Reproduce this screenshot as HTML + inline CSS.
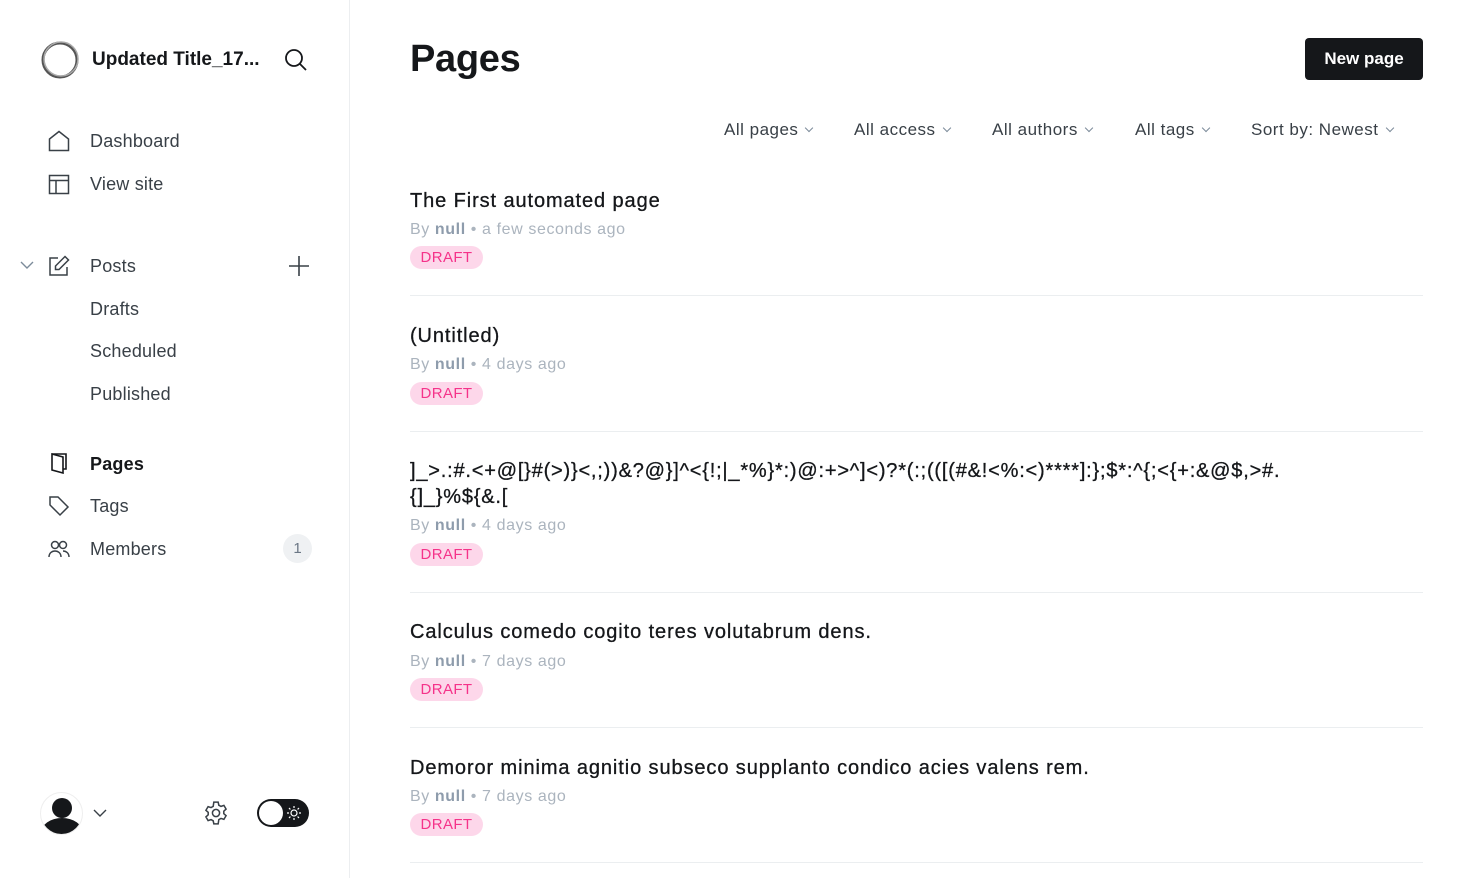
<!DOCTYPE html>
<html><head><meta charset="utf-8"><style>
*{margin:0;padding:0;box-sizing:border-box}
body{width:1483px;height:878px;overflow:hidden;background:#fff;font-family:"Liberation Sans",sans-serif;color:#15171a;position:relative}
.side{position:absolute;left:0;top:0;width:350px;height:878px;border-right:1px solid #eceef0}
.a{position:absolute}
.nav{position:absolute;left:90px;font-size:18px;color:#394047;letter-spacing:0.2px}
.ic{position:absolute;left:48px}
.main .t{position:absolute;left:410px;font-size:20px;color:#15171a;line-height:26px;letter-spacing:0.9px;-webkit-text-stroke:0.3px #15171a}
.m{position:absolute;left:410px;font-size:16px;color:#abb4be;letter-spacing:0.6px}
.m b{font-weight:bold;color:#8e9cac}
.bd{position:absolute;left:410px;height:23px;width:73px;border-radius:12px;background:#fdd7ea;color:#f5338a;font-size:15px;text-align:center;line-height:23px;letter-spacing:0.4px}
.hr{position:absolute;left:410px;width:1013px;height:1px;background:#ebeef0}
.f{position:absolute;top:120px;font-size:17px;color:#394047;letter-spacing:0.5px}
.f:after{content:"";display:inline-block;width:5px;height:5px;border-right:1px solid #7c8b9a;border-bottom:1px solid #7c8b9a;transform:rotate(45deg);margin-left:8px;vertical-align:4px}
</style></head><body>
<div class="side">
<svg class="a" style="left:40px;top:40px" width="40" height="40" viewBox="0 0 40 40"><circle cx="20" cy="20" r="17" fill="none" stroke="#555" stroke-width="3"/><circle cx="21" cy="19" r="17" fill="none" stroke="#aaa" stroke-width="1.5"/></svg>
<div class="a" style="left:92px;top:49px;font-size:19px;font-weight:bold">Updated Title_17...</div>
<svg class="a" style="left:284px;top:48px" width="24" height="24" viewBox="0 0 24 24" fill="none" stroke="#15171a" stroke-width="1.8"><circle cx="10" cy="10" r="8"/><path d="M16 16l6 6"/></svg>
<svg class="ic" style="top:130px" width="22" height="22" viewBox="0 0 22 22" fill="none" stroke="#394047" stroke-width="1.5"><path d="M1.5 20.5V9L11 1.5 20.5 9v11.5z"/></svg>
<div class="nav" style="top:131px">Dashboard</div>
<svg class="ic" style="top:173px" width="22" height="22" viewBox="0 0 22 22" fill="none" stroke="#394047" stroke-width="1.5"><rect x="1.5" y="2.5" width="19" height="18"/><path d="M1.5 7.5h19M8 7.5v13"/></svg>
<div class="nav" style="top:174px">View site</div>
<svg class="a" style="left:20px;top:260px" width="14" height="10" viewBox="0 0 14 10" fill="none" stroke="#7c8b9a" stroke-width="1.4"><path d="M1 2l6 6 6-6"/></svg>
<svg class="ic" style="top:255px" width="22" height="22" viewBox="0 0 22 22" fill="none" stroke="#394047" stroke-width="1.5"><path d="M10 3H2v17h17v-8"/><path d="M17 1.5l3.5 3.5L11 14.5H7.5V11z"/></svg>
<div class="nav" style="top:256px">Posts</div>
<svg class="a" style="left:288px;top:255px" width="22" height="22" viewBox="0 0 22 22" stroke="#394047" stroke-width="1.6"><path d="M11 1v20M1 11h20"/></svg>
<div class="nav" style="top:299px">Drafts</div>
<div class="nav" style="top:341px">Scheduled</div>
<div class="nav" style="top:384px">Published</div>
<svg class="ic" style="top:452px" width="22" height="22" viewBox="0 0 22 22" fill="none" stroke="#15171a" stroke-width="1.6"><path d="M4 2h14v15h-3"/><path d="M4 2l11 3v16L4 18z"/></svg>
<div class="nav" style="top:454px;font-weight:bold;color:#15171a">Pages</div>
<svg class="ic" style="top:495px" width="22" height="22" viewBox="0 0 22 22" fill="none" stroke="#394047" stroke-width="1.5"><path d="M2 2h8l10 10-8 8L2 10z"/></svg>
<div class="nav" style="top:496px">Tags</div>
<svg class="ic" style="top:538px" width="22" height="22" viewBox="0 0 22 22" fill="none" stroke="#394047" stroke-width="1.5"><circle cx="7" cy="7" r="3.5"/><path d="M1 19c0-4 3-6 6-6s6 2 6 6"/><circle cx="15" cy="7" r="3.5"/><path d="M15 13c3 0 6 2 6 6"/></svg>
<div class="nav" style="top:539px">Members</div>
<div class="a" style="left:283px;top:534px;width:29px;height:29px;border-radius:50%;background:#eff1f3;color:#6b7785;font-size:15px;text-align:center;line-height:29px">1</div>
<div class="a" style="left:40px;top:792px;width:43px;height:43px;border-radius:50%;border:1px solid #eee;overflow:hidden">
<div class="a" style="left:11px;top:5px;width:20px;height:20px;border-radius:50%;background:#15171a"></div>
<div class="a" style="left:0px;top:25px;width:42px;height:30px;border-radius:50% 50% 0 0;background:#15171a"></div></div>
<svg class="a" style="left:93px;top:808px" width="14" height="10" viewBox="0 0 14 10" fill="none" stroke="#394047" stroke-width="1.4"><path d="M1 2l6 6 6-6"/></svg>
<svg class="a" style="left:203px;top:800px" width="26" height="26" viewBox="0 0 24 24" fill="none" stroke="#394047" stroke-width="1.4"><path d="M10 2h4l.6 2.8 2 1.1 2.7-.9 2 3.4-2.1 1.9v2.3l2.1 1.9-2 3.4-2.7-.9-2 1.1L14 22h-4l-.6-2.8-2-1.1-2.7.9-2-3.4 2.1-1.9v-2.3L2.7 9.5l2-3.4 2.7.9 2-1.1z"/><circle cx="12" cy="12" r="3.3"/></svg>
<div class="a" style="left:257px;top:799px;width:52px;height:28px;border-radius:14px;background:#15171a">
<div class="a" style="left:2px;top:2px;width:24px;height:24px;border-radius:50%;background:#fff"></div>
<svg class="a" style="left:29px;top:6px" width="16" height="16" viewBox="0 0 16 16" fill="none" stroke="#fff" stroke-width="1.2"><circle cx="8" cy="8" r="3"/><path d="M8 1v2M8 13v2M1 8h2M13 8h2M3 3l1.4 1.4M11.6 11.6L13 13M3 13l1.4-1.4M11.6 4.4L13 3"/></svg></div>
</div>
<div class="main">
<div class="a" style="left:410px;top:38px;font-size:38px;font-weight:bold;letter-spacing:-0.3px">Pages</div>
<div class="a" style="left:1305px;top:38px;width:118px;height:42px;background:#15171a;border-radius:4px;color:#fff;font-size:17px;font-weight:bold;text-align:center;line-height:42px">New page</div>
<div class="f" style="left:724px">All pages</div>
<div class="f" style="left:854px">All access</div>
<div class="f" style="left:992px">All authors</div>
<div class="f" style="left:1135px">All tags</div>
<div class="f" style="left:1251px">Sort by: Newest</div>

<div class="t" style="top:188px">The First automated page</div>
<div class="m" style="top:221px">By <b>null</b> • a few seconds ago</div>
<div class="bd" style="top:246px">DRAFT</div>
<div class="hr" style="top:295px"></div>

<div class="t" style="top:323px">(Untitled)</div>
<div class="m" style="top:356px">By <b>null</b> • 4 days ago</div>
<div class="bd" style="top:382px">DRAFT</div>
<div class="hr" style="top:431px"></div>

<div class="t" style="top:458px;width:960px;letter-spacing:0.8px">]_&gt;.:#.&lt;+@[}#(&gt;)}&lt;,;))&amp;?@}]^&lt;{!;|_*%}*:)@:+&gt;^]&lt;)?*(:;(([(#&amp;!&lt;%:&lt;)****]:};$*:^{;&lt;{+:&amp;@$,&gt;#. {]_}%${&amp;.[</div>
<div class="m" style="top:517px">By <b>null</b> • 4 days ago</div>
<div class="bd" style="top:543px">DRAFT</div>
<div class="hr" style="top:592px"></div>

<div class="t" style="top:619px">Calculus comedo cogito teres volutabrum dens.</div>
<div class="m" style="top:653px">By <b>null</b> • 7 days ago</div>
<div class="bd" style="top:678px">DRAFT</div>
<div class="hr" style="top:727px"></div>

<div class="t" style="top:755px">Demoror minima agnitio subseco supplanto condico acies valens rem.</div>
<div class="m" style="top:788px">By <b>null</b> • 7 days ago</div>
<div class="bd" style="top:813px">DRAFT</div>
<div class="hr" style="top:862px"></div>
</div>
</body></html>
